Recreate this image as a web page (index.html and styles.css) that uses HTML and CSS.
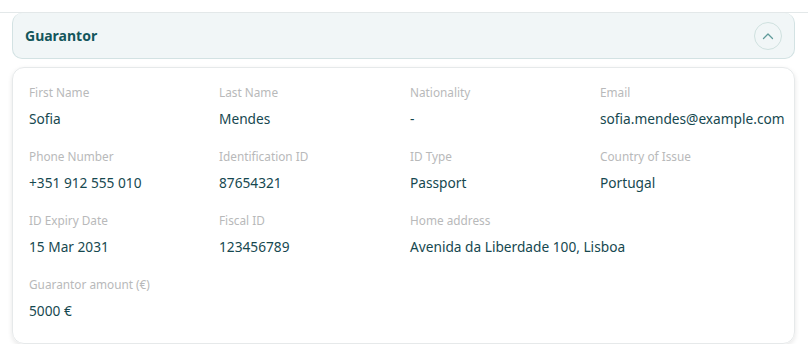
FILE: index.html
```html
<!DOCTYPE html>
<html>
	<head>
		<meta charset="utf-8">
		<title>Guarantor</title>
		<link rel="stylesheet" href="styles.css">
	</head>
	<body>
		<div class="page">
			<div class="section">
				<div class="section-head">
					<span class="section-title">Guarantor</span>
					<span class="toggle">
						<svg width="12" height="8" viewBox="0 0 12 8"><path d="M1.5 6.5 L6 2 L10.5 6.5" fill="none" stroke="#5f9a9a" stroke-width="1.3" stroke-linecap="round" stroke-linejoin="round"/></svg>
					</span>
				</div>
				<div class="card">
					<div class="field"><div class="label">First Name</div><div class="value">Sofia</div></div>
					<div class="field"><div class="label">Last Name</div><div class="value">Mendes</div></div>
					<div class="field"><div class="label">Nationality</div><div class="value">-</div></div>
					<div class="field"><div class="label">Email</div><div class="value">sofia.mendes@example.com</div></div>

					<div class="field"><div class="label">Phone Number</div><div class="value">+351 912 555 010</div></div>
					<div class="field"><div class="label">Identification ID</div><div class="value">87654321</div></div>
					<div class="field"><div class="label">ID Type</div><div class="value">Passport</div></div>
					<div class="field"><div class="label">Country of Issue</div><div class="value">Portugal</div></div>

					<div class="field"><div class="label">ID Expiry Date</div><div class="value">15 Mar 2031</div></div>
					<div class="field"><div class="label">Fiscal ID</div><div class="value">123456789</div></div>
					<div class="field wide"><div class="label">Home address</div><div class="value">Avenida da Liberdade 100, Lisboa</div></div>

					<div class="field"><div class="label">Guarantor amount (€)</div><div class="value">5000 €</div></div>
				</div>
			</div>
		</div>
	</body>
</html>
```

FILE: styles.css
```css
body{
	margin: 0;
	background: #ffffff;
	font-family: "Noto Sans", "Inter", sans-serif;
}
.page{
	margin-top: 12px;
	border-top: 1px solid #e3e8e9;
	padding: 0 13px 0 12px;
}
.section-head{  /* title bar */
	height: 46px;
	box-sizing: border-box;
	display: flex;
	align-items: center;
	justify-content: space-between;
	padding: 0 12px 0 12px;
	background: #f1f6f7;
	border: 1px solid #d3e2e3;
	border-top: none;
	border-radius: 10px;
}
.section-title{
	color: #14565c;
	font-size: 14px;
	font-weight: 700;
}
.toggle{
	width: 26px;
	height: 26px;
	border: 1px solid #cfe1df;
	border-radius: 50%;
	display: flex;
	align-items: center;
	justify-content: center;
}
.card{  /* details */
	margin-top: 8px;
	height: 277px;
	box-sizing: border-box;
	border: 1px solid #e6e9ea;
	border-radius: 12px;
	box-shadow: 0 2px 5px rgba(0,0,0,0.1);
	padding: 16px 10px 0 16px;
	display: grid;
	grid-template-columns: 190px 191px 190px 1fr;
	grid-auto-rows: 64px;
	align-content: start;
}
.wide{
	grid-column: span 2;
}
.label{
	color: #b8b9ba;
	font-size: 11.8px;
	line-height: 16px;
}
.value{
	margin-top: 9px;
	color: #16484f;
	font-size: 13.7px;
	line-height: 20px;
}
```
